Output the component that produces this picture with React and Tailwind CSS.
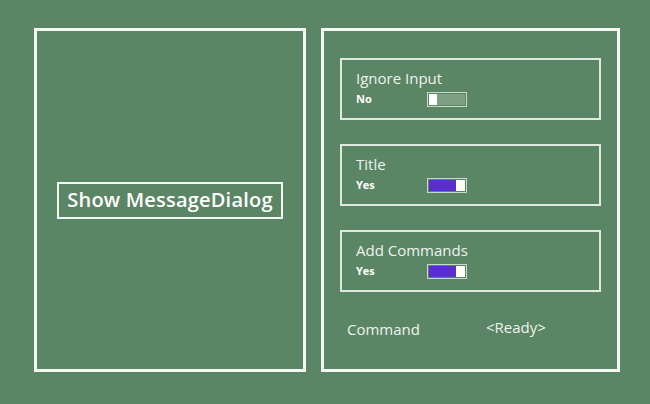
import { useState } from 'react';

function Toggle({ on }) {
  return (
    <div className="w-[40px] h-[15px] border border-[#c9d8cb] flex items-stretch p-[1px]">
      {on ? (
        <>
          <div className="flex-1 bg-[#5b2fcf]" />
          <div className="w-[9px] bg-white" />
        </>
      ) : (
        <>
          <div className="w-[8px] bg-white" />
          <div className="flex-1 bg-[#7f9f85]" />
        </>
      )}
    </div>
  );
}

function OptionBox({ label, value, on }) {
  return (
    <div className="w-[261px] h-[62px] border-2 border-[#dfe9e0] pl-[14px] pt-[9px]">
      <div className="text-[15px] leading-[18px] text-[#eef3ee]">{label}</div>
      <div className="flex items-center mt-[4px]">
        <span className="w-[71px] text-[11px] font-bold text-white">{value}</span>
        <Toggle on={on} />
      </div>
    </div>
  );
}

export default function App() {
  const [opts] = useState([
    { label: 'Ignore Input', value: 'No', on: false },
    { label: 'Title', value: 'Yes', on: true },
    { label: 'Add Commands', value: 'Yes', on: true },
  ]);

  return (
    <div
      className="w-[650px] h-[404px] bg-[#5b8665] flex gap-[15px] pl-[34px] pt-[28px]"
      style={{ fontFamily: '"Open Sans", "Noto Sans", sans-serif' }}
    >
      {/* Left panel */}
      <div className="w-[272px] h-[344px] border-[3px] border-[#f4f8f4] flex items-center justify-center">
        <button className="w-[226px] h-[37px] border-2 border-[#f4f8f4] text-white text-[20px] font-semibold leading-none tracking-[0.2px]">
          Show MessageDialog
        </button>
      </div>

      {/* Right panel */}
      <div className="w-[299px] h-[344px] border-[3px] border-[#f4f8f4] pl-[16px] pt-[27px] flex flex-col">
        <div className="flex flex-col gap-[24px]">
          {opts.map(o => (
            <OptionBox key={o.label} {...o} />
          ))}
        </div>
        <div className="flex items-center mt-[22px] pl-[7px] text-[#eef3ee] text-[15px]">
          <span className="w-[139px] mt-[4px]">Command</span>
          <span>&lt;Ready&gt;</span>
        </div>
      </div>
    </div>
  );
}
